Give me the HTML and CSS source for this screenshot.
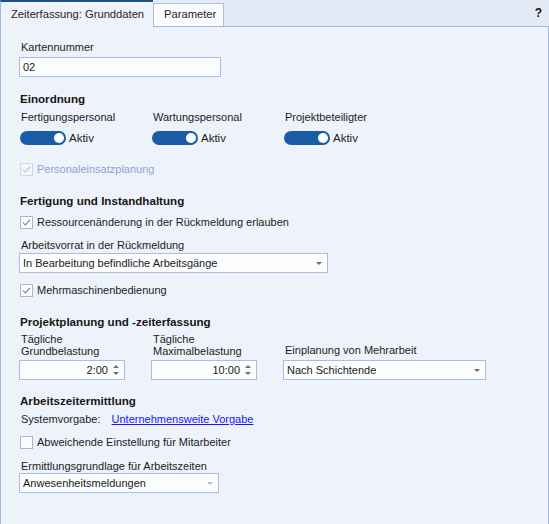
FILE: index.html
```html
<!DOCTYPE html>
<html lang="de">
<head>
<meta charset="utf-8">
<title>Zeiterfassung</title>
<link rel="stylesheet" href="styles.css">
</head>
<body>
<div class="window">
  <div class="tabstrip">
    <div class="tab active">Zeiterfassung: Grunddaten</div>
    <div class="tab">Parameter</div>
    <div class="spacer"></div>
    <div class="help">?</div>
  </div>
  <div class="panel">
    <div class="field f-karte">
      <div class="label">Kartennummer</div>
      <div class="input w-karte">02</div>
    </div>

    <div class="heading h-einordnung">Einordnung</div>
    <div class="toggle-row">
      <div class="toggle-col">
        <div class="label">Fertigungspersonal</div>
        <div class="toggle-line"><span class="toggle"><span class="knob"></span></span><span class="toggle-text">Aktiv</span></div>
      </div>
      <div class="toggle-col">
        <div class="label">Wartungspersonal</div>
        <div class="toggle-line"><span class="toggle"><span class="knob"></span></span><span class="toggle-text">Aktiv</span></div>
      </div>
      <div class="toggle-col">
        <div class="label">Projektbeteiligter</div>
        <div class="toggle-line"><span class="toggle"><span class="knob"></span></span><span class="toggle-text">Aktiv</span></div>
      </div>
    </div>
    <div class="check disabled c-personal">
      <span class="box"><svg viewBox="0 0 13 13" width="13" height="13"><path d="M3 6.5 L5.3 9 L10 3.8" fill="none" stroke="#b9c3d2" stroke-width="1.1"/></svg></span>
      <span>Personaleinsatzplanung</span>
    </div>

    <div class="heading h-fertigung">Fertigung und Instandhaltung</div>
    <div class="check c-ressourcen">
      <span class="box"><svg viewBox="0 0 13 13" width="13" height="13"><path d="M3 6.5 L5.3 9 L10 3.8" fill="none" stroke="#707a88" stroke-width="1.1"/></svg></span>
      <span>Ressourcenänderung in der Rückmeldung erlauben</span>
    </div>
    <div class="field f-vorrat">
      <div class="label">Arbeitsvorrat in der Rückmeldung</div>
      <div class="input select w-vorrat">In Bearbeitung befindliche Arbeitsgänge<span class="caret"></span></div>
    </div>
    <div class="check c-mehr">
      <span class="box"><svg viewBox="0 0 13 13" width="13" height="13"><path d="M3 6.5 L5.3 9 L10 3.8" fill="none" stroke="#707a88" stroke-width="1.1"/></svg></span>
      <span>Mehrmaschinenbedienung</span>
    </div>

    <div class="heading h-projekt">Projektplanung und -zeiterfassung</div>
    <div class="proj-row">
      <div class="proj-col c1">
        <div class="label two">Tägliche<br>Grundbelastung</div>
        <div class="input spin w-spin"><span class="val">2:00</span><span class="spinbtn"><span class="up"></span><span class="down"></span></span></div>
      </div>
      <div class="proj-col c2">
        <div class="label two">Tägliche<br>Maximalbelastung</div>
        <div class="input spin w-spin"><span class="val">10:00</span><span class="spinbtn"><span class="up"></span><span class="down"></span></span></div>
      </div>
      <div class="proj-col c3">
        <div class="label">Einplanung von Mehrarbeit</div>
        <div class="input select w-mehrarbeit">Nach Schichtende<span class="caret"></span></div>
      </div>
    </div>

    <div class="heading h-arbeitszeit">Arbeitszeitermittlung</div>
    <div class="sysline">
      <span class="syslabel">Systemvorgabe:</span>
      <a class="link" href="#">Unternehmensweite Vorgabe</a>
    </div>
    <div class="check c-abw">
      <span class="box"></span>
      <span>Abweichende Einstellung für Mitarbeiter</span>
    </div>
    <div class="field f-ermitt">
      <div class="label">Ermittlungsgrundlage für Arbeitszeiten</div>
      <div class="input select w-ermitt">Anwesenheitsmeldungen<span class="caret light"></span></div>
    </div>
  </div>
</div>
</body>
</html>
```

FILE: styles.css
```css
html, body {
  margin: 0;
  padding: 0;
  height: 100%;
}
body {
  font-family: "Liberation Sans", Arial, sans-serif;
  font-size: 11px;
  color: #1b1b1b;
  background: #eef3fb;
}
.window {
  height: 524px;
  display: flex;
  flex-direction: column;
}
.tabstrip {
  height: 26px;
  display: flex;
  align-items: flex-end;
  background: #e5ebf6;
  border-bottom: 1px solid #9dbbdf;
}
.tab {
  height: 23px;
  line-height: 21px;
  padding: 0 10px;
  background: #fafcff;
  border: 1px solid #a9c1e1;
  border-bottom: none;
  box-sizing: border-box;
  font-size: 11.2px;
  color: #1e1e2a;
  white-space: nowrap;
  width: 71px;
}
.tab.active {
  height: 27px;
  margin-bottom: -1px;
  background: #eef3fb;
  border: none;
  border-top: 2px solid #1f4f87;
  border-left: 1px solid #9dbbdf;
  line-height: 25px;
  padding: 0 0 0 10px;
  width: 153px;
}
.spacer { flex: 1; }
.help {
  align-self: center;
  font-weight: bold;
  font-size: 12px;
  margin-right: 7px;
  color: #111;
}
.panel {
  flex: 1;
  border-left: 1px solid #9dbbdf;
  border-right: 1px solid #9dbbdf;
  padding: 14px 0 0 18px;
}
.label {
  line-height: 13px;
  height: 13px;
  padding-left: 2px;
  white-space: nowrap;
}
.label.two { height: auto; line-height: 12px; }
.heading {
  font-weight: bold;
  font-size: 11.6px;
  line-height: 13px;
  padding-left: 1px;
  color: #151515;
}
.input {
  box-sizing: border-box;
  height: 20px;
  border: 1px solid #a5bfe2;
  background: #fcfdff;
  line-height: 18px;
  padding-left: 3px;
  margin-top: 3px;
  position: relative;
  white-space: nowrap;
}
.w-karte { width: 202px; }
.w-vorrat { width: 309px; margin-top: 1px; }
.w-spin { width: 106px; }
.w-mehrarbeit { width: 203px; }
.w-ermitt { width: 200px; margin-top: 0; }
.caret {
  position: absolute;
  right: 5px;
  top: 8px;
  width: 0;
  height: 0;
  border-left: 3px solid transparent;
  border-right: 3px solid transparent;
  border-top: 3px solid #6b6b6b;
}
.caret.light { border-top-color: #b7bcc4; }
.spin { display: flex; justify-content: flex-end; padding-right: 4px; }
.spin .val { margin-right: 5px; }
.spinbtn {
  width: 7px;
  display: flex;
  flex-direction: column;
  justify-content: center;
  gap: 4px;
}
.spinbtn .up, .spinbtn .down {
  width: 0; height: 0;
  border-left: 3px solid transparent;
  border-right: 3px solid transparent;
}
.spinbtn .up { border-bottom: 3px solid #6e6e6e; }
.spinbtn .down { border-top: 3px solid #6e6e6e; }

.h-einordnung { margin-top: 15px; }
.toggle-row { display: flex; margin-top: 6px; }
.toggle-col { width: 132px; }
.toggle-line { display: flex; align-items: center; margin-top: 7px; height: 14px; }
.toggle {
  width: 46px;
  height: 14px;
  border-radius: 7px;
  background: #1a5ca6;
  display: flex;
  align-items: center;
  justify-content: flex-end;
  padding-right: 2px;
  box-sizing: border-box;
  margin-left: 1px;
}
.knob {
  width: 10px; height: 10px;
  border-radius: 50%;
  background: #fff;
}
.toggle-text { margin-left: 3px; font-size: 11.5px; }

.check { display: flex; align-items: center; height: 14px; }
.check .box {
  width: 13px; height: 13px;
  box-sizing: border-box;
  border: 1px solid #a5b7d2;
  background: #fcfdff;
  margin: 0 4px 0 1px;
  display: flex;
}
.check .box svg { margin: -1px; }
.check.disabled { color: #8ca4cf; }
.check.disabled .box { border-color: #cfd8e6; background: #f3f6fb; }
.c-personal { margin-top: 17px; }
.h-fertigung { margin-top: 18px; }
.c-ressourcen { margin-top: 8px; }
.f-vorrat { margin-top: 10px; }
.c-mehr { margin-top: 10px; }
.h-projekt { margin-top: 18px; }
.proj-row { display: flex; align-items: flex-end; margin-top: 5px; }
.proj-col.c1, .proj-col.c2 { width: 132px; }
.h-arbeitszeit { margin-top: 14px; }
.sysline { margin-top: 6px; line-height: 13px; padding-left: 2px; }
.syslabel { margin-right: 8px; }
.link { color: #1414ff; text-decoration: underline; }
.c-abw { margin-top: 9px; }
.f-ermitt { margin-top: 11px; }
```
